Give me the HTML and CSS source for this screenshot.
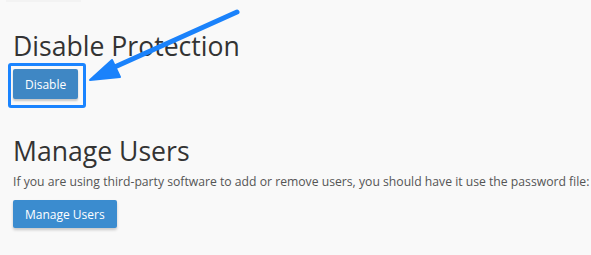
FILE: index.html
```html
<!DOCTYPE html>
<html>
<head>
<meta charset="utf-8">
<link rel="stylesheet" href="styles.css">
</head>
<body>
<div class="page">
  <div class="topline"></div>
  <section class="section first">
    <h2 class="title">Disable Protection</h2>
    <div class="highlight">
      <button class="btn btn-disable">Disable</button>
    </div>
  </section>
  <section class="section second">
    <h2 class="title">Manage Users</h2>
    <p class="desc">If you are using third-party software to add or remove users, you should have it use the password file:</p>
    <button class="btn btn-manage">Manage Users</button>
  </section>
  <svg class="arrow" width="591" height="255" viewBox="0 0 591 255">
    <line x1="237" y1="12" x2="108" y2="70" stroke="#1a82fb" stroke-width="5" stroke-linecap="round"/>
    <polygon points="90,80 112,60 120,77" fill="#1a82fb" stroke="#1a82fb" stroke-width="2" stroke-linejoin="round"/>
  </svg>
</div>
</body>
</html>
```
FILE: styles.css
```css
html, body {
  margin: 0;
  padding: 0;
  background: #f9f9f9;
}
.page {
  position: relative;
  width: 591px;
  height: 255px;
  overflow: hidden;
  font-family: "Open Sans", "DejaVu Sans", sans-serif;
  color: #333;
}
.topline {
  width: 75px;
  height: 2px;
  margin-left: 6px;
  background: #f3f3f3;
}
.section {
  padding-left: 13px;
}
.first {
  padding-top: 29px;
}
.title {
  margin: 0;
  font-size: 26.6px;
  font-weight: 400;
  line-height: 30px;
  color: #333;
}
.highlight {
  display: inline-block;
  margin-left: -5px;
  margin-top: 2px;
  padding: 3px 5px 6px 2px;
  border: 3px solid #1a84ff;
  border-radius: 3px;
}
.btn {
  display: block;
  font-family: "Open Sans", "DejaVu Sans", sans-serif;
  font-size: 12px;
  color: #fff;
  border: none;
  border-radius: 2px;
  padding: 0 12px;
  cursor: pointer;
}
.btn-disable {
  height: 30px;
  background: #3f87c4;
  box-shadow: 0 2px 2px rgba(0,0,0,0.2);
}
.second {
  padding-top: 28px;
}
.desc {
  margin: 7px 0 10px;
  font-size: 12.2px;
  line-height: 17px;
  color: #555;
}
.btn-manage {
  height: 28px;
  background: #3b8ccf;
  box-shadow: 0 2px 3px rgba(0,0,0,0.2);
}
.arrow {
  position: absolute;
  left: 0;
  top: 0;
  pointer-events: none;
}
```
